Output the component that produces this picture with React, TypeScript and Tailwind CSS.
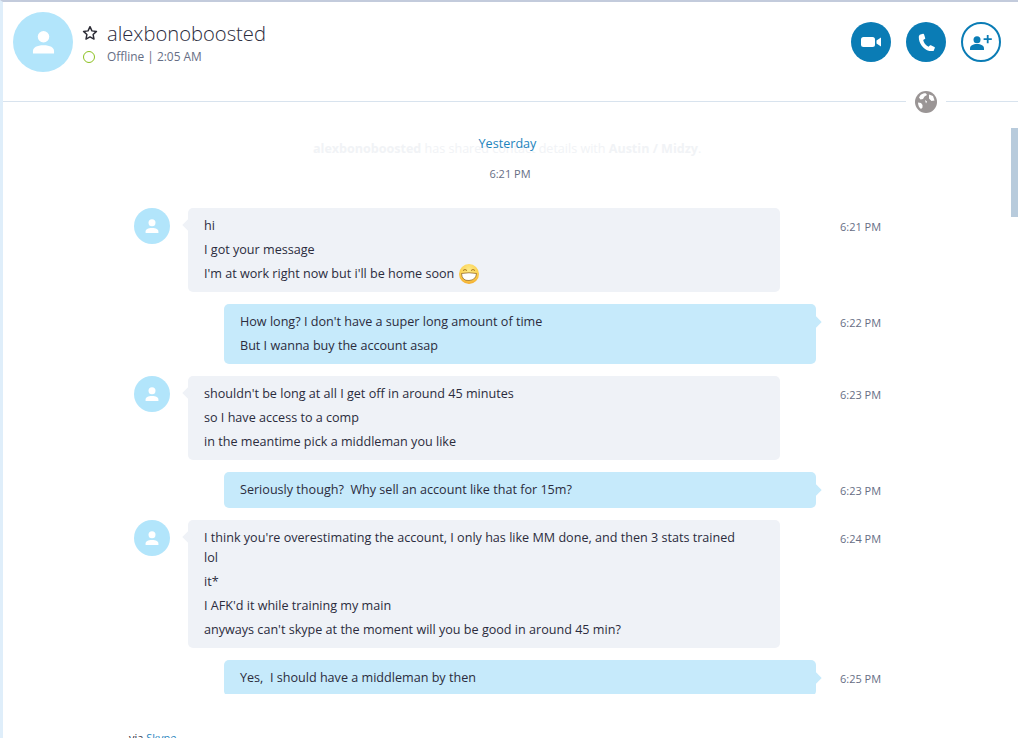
const font = { fontFamily: '"Open Sans", "Noto Sans", sans-serif' };

function Person({ className }: { className: string }) {
  return (
    <svg viewBox="0 0 24 24" className={className} fill="currentColor">
      <circle cx="12" cy="6.500" r="6" />
      <path d="M1 24v-2.500C1 18 5 15.500 12 15.500s11 2.500 11 6V24z" />
    </svg>
  );
}

function Avatar() {
  return (
    <div className="flex h-9 w-9 shrink-0 items-center justify-center rounded-full bg-[#b2e5fb] text-white">
      <Person className="h-[14px] w-[14px]" />
    </div>
  );
}

function Grin() {
  return (
    <svg viewBox="0 0 20 20" className="ml-[5px] inline-block h-5 w-5 shrink-0">
      <defs>
        <radialGradient id="g" cx="0.5" cy="0.3" r="0.8">
          <stop offset="0" stopColor="#fdeb8a" />
          <stop offset="0.6" stopColor="#fbcf4e" />
          <stop offset="1" stopColor="#f09a1e" />
        </radialGradient>
      </defs>
      <circle cx="10" cy="10" r="10" fill="url(#g)" />
      <path d="M4 6.500Q6 4.500 8 6.500M12 6.500Q14 4.500 16 6.500" fill="none" stroke="#a8741c" strokeWidth="1" />
      <path d="M2.500 9.500Q10 8 17.500 9.500Q17 16 10 16.500T2.500 9.500z" fill="#fff" stroke="#8a5a14" strokeWidth="0.700" />
    </svg>
  );
}

function Time({ t, ml }: { t: string; ml: string }) {
  return <div className={`${ml} w-[41px] whitespace-nowrap pt-[11px] text-[11px] leading-[15px] text-[#666e85]`}>{t}</div>;
}

function In({ lines, t, h }: { lines: React.ReactNode[]; t: string; h: string }) {
  return (
    <div className="flex shrink-0 pl-[131px]">
      <Avatar />
      <div className={`relative ml-[18px] flex w-[592px] flex-col gap-1 rounded-[5px] bg-[#eff2f7] pl-4 pr-[42px] pt-2 text-[12.6px] leading-[20px] text-[#2b2c3d] ${h}`}>
        <div className="absolute left-[-4px] top-[13px] h-2 w-2 rotate-45 bg-[#eff2f7]" />
        {lines.map((l, i) => <div key={i}>{l}</div>)}
      </div>
      <Time t={t} ml="ml-[60px]" />
    </div>
  );
}

function Out({ lines, t, h }: { lines: string[]; t: string; h: string }) {
  return (
    <div className="flex shrink-0 pl-[221px]">
      <div className={`relative flex w-[592px] flex-col gap-1 rounded-[5px] bg-[#c6eafb] pl-4 pt-2 text-[12.6px] leading-[20px] text-[#2b2c3d] ${h}`}>
        <div className="absolute right-[-4px] top-[14px] h-2 w-2 rotate-45 bg-[#c6eafb]" />
        {lines.map((l, i) => <div key={i} className="whitespace-nowrap">{l}</div>)}
      </div>
      <Time t={t} ml="ml-[24px]" />
    </div>
  );
}

export default function App() {
  return (
    <div style={font} className="relative flex h-[738px] w-[1018px] flex-col overflow-hidden border-l-[3px] border-t-2 border-l-[#dfeefa] border-t-[#c3cbdc] bg-white">
      <div className="absolute left-[-3px] top-[286px] h-[42px] w-[3px] bg-[#c6eafb]" />
      <div className="absolute left-[-3px] top-[195px] h-px w-[3px] bg-white" />
      <header className="flex h-[100px] shrink-0 items-start border-b border-b-[#d8e3ee]">
        <div className="ml-[10px] mt-[10px] flex h-[60px] w-[60px] items-center justify-center rounded-full bg-[#b2e5fb] text-white">
          <Person className="h-[24px] w-[23px]" />
        </div>
        <div className="ml-[10px] mt-[18px] flex flex-col">
          <div className="flex items-center">
            <svg viewBox="0 0 24 24" className="-ml-px h-[16px] w-[16px]" fill="none" stroke="#2c2c36" strokeWidth="2.200" strokeLinejoin="round">
              <path d="M12 2.500l2.900 6.300 6.800.8-5 4.700 1.300 6.800-6-3.400-6 3.400 1.300-6.800-5-4.700 6.800-.8z" />
            </svg>
            <span className="ml-[9px] text-[20.2px] font-light leading-[26px] text-[#2b2c3d]">alexbonoboosted</span>
          </div>
          <div className="mt-[2px] flex items-center">
            <span className="mt-[2px] h-3 w-3 rounded-full border-[1.500px] border-[#8cc11f]" />
            <span className="ml-[12px] text-[11.9px] leading-4 text-[#666e85]">Offline | 2:05 AM</span>
          </div>
        </div>
        <div className="ml-auto mr-[17px] mt-[20px] flex gap-[15px]">
          <div className="flex h-10 w-10 items-center justify-center rounded-full bg-[#0a7cb5]">
            <svg viewBox="0 0 20 10" className="h-[10px] w-5" fill="#fff">
              <rect x="0" y="0" width="14" height="10" rx="2.500" />
              <path d="M15.500 3.500L20 .5V9.500L15.500 6.500z" />
            </svg>
          </div>
          <div className="flex h-10 w-10 items-center justify-center rounded-full bg-[#0a7cb5]">
            <svg viewBox="2 0 17 18" className="h-[18px] w-[17px]" fill="#fff">
              <path d="M4.500 1.500L7 .8c.5-.1.9.1 1 .5l1.200 3.600c.1.400 0 .8-.4 1L7.200 7c.5 2.800 2.600 5.600 5.300 6.800l1.300-1.300c.3-.3.700-.4 1.100-.2l3.500 1.700c.4.200.6.600.4 1l-.9 2.300c-.3.8-1 1.300-1.900 1.200C8.500 17.800 2.800 11.500 2.800 4c0-1.200.6-2.200 1.700-2.500z" />
            </svg>
          </div>
          <div className="flex h-10 w-10 items-center justify-center rounded-full border-2 border-[#0a7cb5]">
            <svg viewBox="0 0 22 15" className="h-[15px] w-[22px]" fill="#0a7cb5">
              <circle cx="7" cy="4.700" r="3.500" />
              <path d="M0 15v-1.500C0 10.500 3 9 7 9s7 1.500 7 4.500V15z" />
              <path d="M16.800 0h1.800v3.200h3.200v1.800h-3.200v3.200h-1.800V5h-3.200V3.200h3.200z" />
            </svg>
          </div>
        </div>
      </header>
      <div className="absolute right-[72px] top-[88px] flex h-6 w-[40px] items-center justify-center bg-white">
        <svg viewBox="0 0 22 22" className="h-[22px] w-[22px]">
          <circle cx="11" cy="11" r="11" fill="#9a9595" />
          <path d="M5.500 4c2-1.500 4.500-2 5.500-1.500l1 1.500-2.500 1.500-1.500 2.500-2.500.5-1.500-2zM14 3.500l4 1.500 1.500 4.500-3 .5-2.500-2.500zM3 11.500l3 .5 1.500 2 0 2.500-1.500 1.500C4 16.500 3 14 3 11.500zM10 9l2 1.500-1 2z" fill="#fff" />
        </svg>
      </div>
      <div className="absolute right-0 top-[126px] h-[89px] w-[7px] bg-[#b8cbdc]" />
      <main className="relative flex h-[592px] shrink-0 flex-col overflow-hidden">
        <div className="absolute left-[310px] top-[38px] whitespace-nowrap text-[12.55px] leading-[18px] text-[#f1f3f6]">
          <b>alexbonoboosted</b> has shared contact details with <b>Austin / Midzy</b>.
        </div>
        <div className="relative mt-[32px] pr-[6px] text-center text-[12.6px] leading-[20px] text-[#1d84bd]">Yesterday</div>
        <div className="relative mt-[12px] pr-px text-center text-[11px] leading-[15px] text-[#666e85]">6:21 PM</div>
        <div className="mt-[27px] flex flex-col gap-3">
          <In h="h-[84px]" t="6:21 PM" lines={["hi", "I got your message", <span className="flex items-center whitespace-nowrap">I'm at work right now but i'll be home soon<Grin /></span>]} />
          <Out h="h-[60px]" t="6:22 PM" lines={["How long? I don't have a super long amount of time", "But I wanna buy the account asap"]} />
          <In h="h-[84px]" t="6:23 PM" lines={["shouldn't be long at all I get off in around 45 minutes", "so I have access to a comp", "in the meantime pick a middleman you like"]} />
          <Out h="h-[36px]" t="6:23 PM" lines={["Seriously though?\u00a0 Why sell an account like that for 15m?"]} />
          <In h="h-[128px]" t="6:24 PM" lines={["I think you're overestimating the account, I only has like MM done, and then 3 stats trained lol", "it*", "I AFK'd it while training my main", "anyways can't skype at the moment will you be good in around 45 min?"]} />
          <Out h="h-[36px]" t="6:25 PM" lines={["Yes,\u00a0 I should have a middleman by then"]} />
        </div>
      </main>
      <footer className="ml-[126px] mt-[36px] shrink-0 whitespace-nowrap text-[11px] leading-[15px] text-[#2b2c3d]">
        via <span className="text-[#1d84bd]">Skype</span>
      </footer>
    </div>
  );
}
